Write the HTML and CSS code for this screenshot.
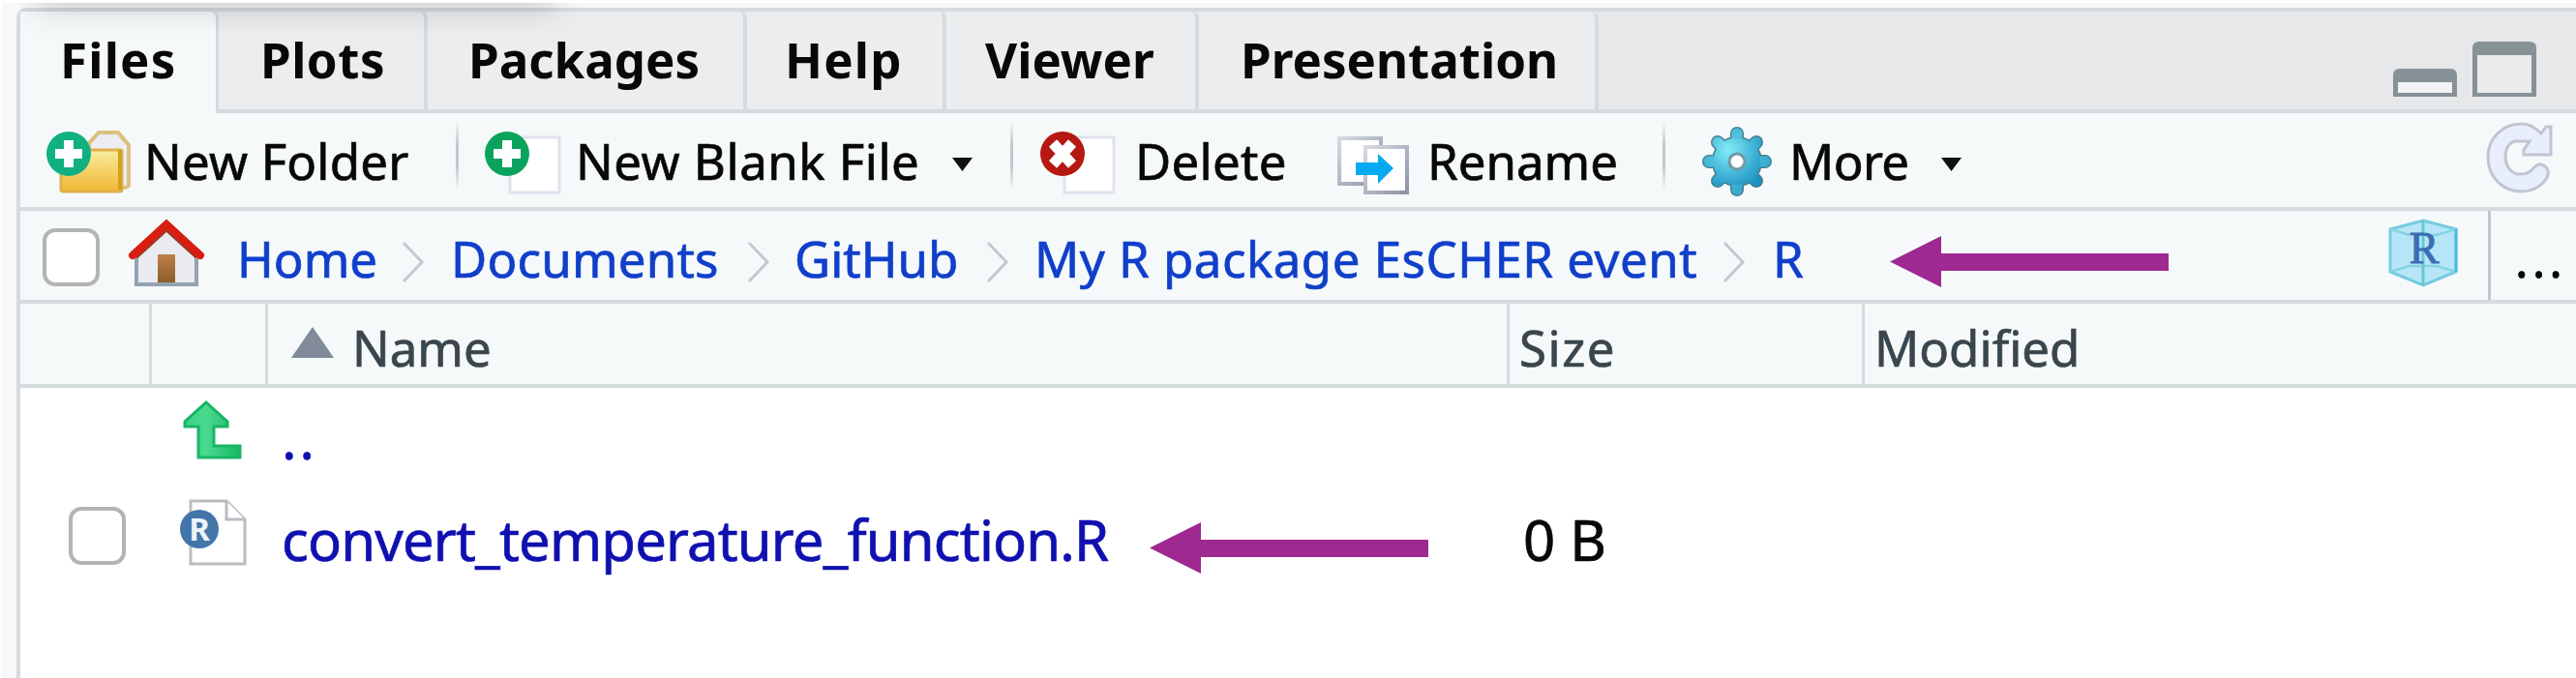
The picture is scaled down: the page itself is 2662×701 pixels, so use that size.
FILE: index.html
```html
<!DOCTYPE html>
<html lang="en">
<head>
<meta charset="utf-8">
<title>Files</title>
<link rel="stylesheet" href="styles.css">
</head>
<body>
<div class="window-shadow"><div class="shadow-source"></div></div>
<main class="pane">
  <nav class="tabs">
    <div class="tab active files">Files</div>
    <div class="tab plots">Plots</div>
    <div class="tab packages">Packages</div>
    <div class="tab help">Help</div>
    <div class="tab viewer">Viewer</div>
    <div class="tab presentation">Presentation</div>
    <div class="tab-fill">
      <svg width="148" height="57" viewBox="0 0 148 57">
        <path d="M0 57V35Q0 28 7 28H59Q66 28 66 35V57Z" fill="#879297"/><rect x="5" y="42" width="56" height="11" fill="#f0f2f3"/>
        <path d="M82 57V7Q82 0 89 0H141Q148 0 148 7V57Z" fill="#879297"/><rect x="87" y="14" width="56" height="39" fill="#e9ebec"/>
      </svg>
    </div>
  </nav>

  <div class="toolbar">
    <svg class="icon-folder" width="88" height="66" viewBox="0 0 88 66">
      <defs><linearGradient id="gold" x2="0" y2="1"><stop offset="0" stop-color="#f9eda0"/><stop offset="1" stop-color="#efb733"/></linearGradient></defs>
      <path d="M44 20V13L54 2H74L85 15V56Q85 59 78 59" fill="#ebedf2" stroke="#dcc17e" stroke-width="4"/>
      <rect x="15" y="20" width="63" height="43" rx="2" fill="url(#gold)" stroke="#dfb04b" stroke-width="3"/>
      <path d="M76 20V61" stroke="#d2a21f" stroke-width="4"/>
      <circle cx="23" cy="24" r="23" fill="#10b081"/><path d="M23 10V38M9 24H37" stroke="#fff" stroke-width="10"/>
    </svg>
    <span class="label folder">New Folder</span>
    <i class="sep"></i>
    <svg class="icon-file" width="80" height="66" viewBox="0 0 80 66">
      <rect x="27" y="7" width="51" height="57" fill="#fff" stroke="#dfe3ec" stroke-width="3"/>
      <circle cx="24" cy="24" r="23" fill="#0aa35d"/><path d="M24 10V38M10 24H38" stroke="#fff" stroke-width="10"/>
    </svg>
    <span class="label blank">New Blank File</span>
    <svg class="caret" width="23" height="16" viewBox="0 0 23 16"><path d="M1 0H22L11.500 14Z" fill="#111"/></svg>
    <i class="sep"></i>
    <svg class="icon-file" width="80" height="66" viewBox="0 0 80 66">
      <rect x="26" y="7" width="51" height="57" fill="#fff" stroke="#dfe3ec" stroke-width="3"/>
      <circle cx="24" cy="24" r="23" fill="#b51811"/><path d="M14 13L34 35M34 13L14 35" stroke="#fff" stroke-width="11"/>
    </svg>
    <span class="label delete">Delete</span>
    <svg class="icon-rename" width="76" height="62" viewBox="0 0 76 62">
      <defs><linearGradient id="edge" x2="1" y2="1"><stop offset="0" stop-color="#d7dae2"/><stop offset="1" stop-color="#8d93a5"/></linearGradient></defs>
      <rect x="3" y="3" width="43" height="47" fill="#fff" stroke="url(#edge)" stroke-width="4"/>
      <rect x="30" y="12" width="43" height="47" fill="#fff" stroke="url(#edge)" stroke-width="4"/>
      <path d="M20 28H43V19L59 34L43 50V41H20Z" fill="#05aaf0"/>
    </svg>
    <span class="label rename">Rename</span>
    <i class="sep"></i>
    <svg class="icon-gear" width="72" height="76" viewBox="0 0 72 76">
      <defs><radialGradient id="teal" gradientUnits="userSpaceOnUse" cx="27" cy="26" r="44"><stop offset="0" stop-color="#83edf8"/><stop offset=".5" stop-color="#4bbddb"/><stop offset="1" stop-color="#1b8fc0"/></radialGradient></defs>
      <g stroke="#467f92" stroke-linecap="round" stroke-width="14"><path d="M36 9V67M7 38H65M16 18L56 58M56 18L16 58"/><circle cx="36" cy="38" r="19" fill="#467f92"/></g>
      <g stroke="url(#teal)" stroke-linecap="round" stroke-width="11"><path d="M36 9V67M7 38H65M16 18L56 58M56 18L16 58"/><circle cx="36" cy="38" r="19" fill="url(#teal)"/></g>
      <path d="M36 9.010L36.010 67M7 38.010L65 38" stroke="#4bbddb" stroke-opacity=".6" stroke-linecap="round" stroke-width="11"/>
      <circle cx="36" cy="38" r="24" fill="url(#teal)"/>
      <circle cx="36" cy="38" r="8" fill="#fff" stroke="#729aa6" stroke-width="3"/>
    </svg>
    <span class="label more">More</span>
    <svg class="caret" width="23" height="16" viewBox="0 0 23 16"><path d="M1 0H22L11.500 14Z" fill="#111"/></svg>
    <svg class="icon-refresh" width="70" height="74" viewBox="0 0 70 74">
      <path d="M57 12C50 5 44 2 37 2C17 2 2 17 2 36C2 57 17 72 37 72C46 72 53 69 59 63C65 57 66 50 61 46C56 42 52 44 48 49C44 54 40 54 31 54C25 51 20 46 20 36C20 27 25 20 31 20H45L39 29V34H67V5H62Z" fill="#e8eefb" stroke="#c0c5d1" stroke-width="3"/>
    </svg>
  </div>

  <div class="crumbs">
    <span class="checkbox"></span>
    <svg class="icon-home" width="80" height="72" viewBox="0 0 80 72">
      <defs><linearGradient id="door" x2="0" y2="1"><stop offset="0" stop-color="#bd814a"/><stop offset="1" stop-color="#8e5c2d"/></linearGradient></defs>
      <path d="M9 36L40 8L71 36V67H9Z" fill="#e9ebf1" stroke="#94a3af" stroke-width="4"/>
      <rect x="31" y="36" width="18" height="29" fill="url(#door)"/>
      <path d="M7 37L40 7L73 37" fill="none" stroke="#9a3a28" stroke-width="9"/>
      <path d="M5 37L40 5L75 37" fill="none" stroke="#d81e10" stroke-width="8" stroke-linecap="round"/>
    </svg>
    <a class="link">Home</a>
    <svg class="chevron" width="24" height="44" viewBox="0 0 24 44"><path d="M2 2L21 22L2 42"/></svg>
    <a class="link docs">Documents</a>
    <svg class="chevron" width="24" height="44" viewBox="0 0 24 44"><path d="M2 2L21 22L2 42"/></svg>
    <a class="link">GitHub</a>
    <svg class="chevron" width="24" height="44" viewBox="0 0 24 44"><path d="M2 2L21 22L2 42"/></svg>
    <a class="link project">My R package EsCHER event</a>
    <svg class="chevron" width="24" height="44" viewBox="0 0 24 44"><path d="M2 2L21 22L2 42"/></svg>
    <a class="link">R</a>
    <svg class="pointer" width="288" height="53" viewBox="0 0 288 53"><path d="M0 26.500L53 0V18H288V36H53V53Z"/></svg>
    <svg class="icon-project" width="72" height="72" viewBox="0 0 72 72">
      <path d="M2 11L36 2L70 11V55L36 69L2 55Z" fill="#b6e5f8" stroke="#75cbdf" stroke-width="3"/>
      <path d="M2 11L22 17H50L70 11M2 55L22 49H50L70 55" fill="none" stroke="#84d3e1" stroke-width="2.500"/>
      <path d="M36 2V69" stroke="#65c9cf" stroke-width="3"/><path d="M70 11V55" stroke="#4dbddc" stroke-width="3"/>
      <text x="37" y="46" text-anchor="middle" class="project-letter">R</text>
    </svg>
    <i class="more-sep"></i>
    <span class="label dots">...</span>
  </div>

  <div class="head">
    <div></div><div></div>
    <div class="name"><svg class="sort" width="44" height="32" viewBox="0 0 44 32"><path d="M22 0L44 32H0Z" fill="#808a99"/></svg><span>Name</span></div>
    <div class="size">Size</div>
    <div class="modified">Modified</div>
  </div>

  <div class="row">
    <span></span>
    <svg class="icon-up" width="62" height="62" viewBox="0 0 62 62">
      <defs><linearGradient id="green"><stop offset="0" stop-color="#3fd284"/><stop offset=".4" stop-color="#48d990"/><stop offset="1" stop-color="#17b960"/></linearGradient></defs>
      <path d="M24 2L46 22V27H32V47H59V59H16V27H2V22Z" fill="url(#green)" stroke="#18b565" stroke-width="3"/>
    </svg>
    <a class="file up">..</a>
  </div>
  <div class="row">
    <span class="checkbox"></span>
    <svg class="icon-r" width="71" height="70" viewBox="0 0 71 70">
      <path d="M12 2H49L68 21V67H12Z" fill="#fff" stroke="#b9bdc1" stroke-width="3"/>
      <path d="M49 2V21H68" fill="#fff" stroke="#b9bdc1" stroke-width="3"/>
      <circle cx="21" cy="31" r="20" fill="#4375a9"/>
      <text x="21" y="43" text-anchor="middle" class="badge-letter">R</text>
    </svg>
    <a class="file">convert_temperature_function.R</a>
    <svg class="pointer" width="288" height="53" viewBox="0 0 288 53"><path d="M0 26.500L53 0V18H288V36H53V53Z"/></svg>
    <span class="bytes">0 B</span>
  </div>
</main>
</body>
</html>
```
FILE: styles.css
```css
* { box-sizing: border-box; }
body {
  margin: 0;
  height: 701px;
  overflow: hidden;
  background: linear-gradient(90deg, #fff 2px, #f6f8fa 2px);
  border-top: 3px solid #fff;
  padding: 5px 0 0 17px;
  font: 51px "Noto Sans", sans-serif;
  color: #080808;
  white-space: nowrap;
}
svg { display: block; overflow: visible; }

.pane {
  height: 693px;
  border: solid #d6dbde;
  border-width: 4px 0 0 4px;
  border-radius: 10px 0 0 0;
  background: #fff;
}
.window-shadow {
  position: absolute;
  left: 20px;
  top: 3px;
  width: 620px;
  height: 60px;
  overflow: hidden;
  pointer-events: none;
}
.shadow-source {
  width: 530px;
  height: 20px;
  margin: -27px 0 0 20px;
  box-shadow: 0 2px 36px 4px rgba(0, 0, 0, .28);
}

.tabs { display: flex; height: 105px; background: #e6e8ea; }
.tab {
  border: solid #d6dbde;
  border-width: 0 4px 4px 0;
  border-top-right-radius: 8px;
  background: #ebedee;
  font-weight: bold;
  line-height: 98.500px;
}
.active { border-width: 0 3px 0 0; background: #f5f9fa; }
.files { width: 205px; padding-left: 41px; letter-spacing: 1.200px; }
.plots { width: 216px; padding-left: 43px; letter-spacing: .5px; }
.packages { width: 330px; padding-left: 42px; }
.help { width: 206px; padding-left: 39px; letter-spacing: 1.200px; }
.viewer { width: 261px; padding-left: 40px; }
.presentation { width: 413px; padding-left: 43px; }
.tab-fill {
  flex: 1;
  display: flex;
  justify-content: flex-end;
  padding: 31px 41px 0 0;
  border-bottom: 4px solid #d6dbde;
}

.toolbar {
  display: grid;
  grid-template-columns: 100px 323px 29px 94px 389px 61px 30px 98px 209px 93px 244px 41px 89px 157px 564px 1fr;
  align-items: start;
  height: 101px;
  padding-left: 27px;
  border-bottom: 4px solid #d6dbde;
  background: #f5f9fa;
}
.label { padding-left: 1px; line-height: 99px; }
.label, .link, .head span, .size, .modified, .file, .bytes { -webkit-text-stroke: .7px currentColor; }
.folder { letter-spacing: .2px; }
.blank { letter-spacing: .5px; }
.delete { letter-spacing: .3px; }
.more { letter-spacing: -.6px; }
.sep {
  width: 3px;
  height: 72px;
  margin-top: 8px;
  background: linear-gradient(transparent, #c3c7ca 35%, #c3c7ca 65%, transparent);
}
.caret { margin-top: 46px; }
.icon-folder, .icon-file { margin-top: 18px; }
.icon-rename { margin-top: 23px; }
.icon-gear { margin-top: 12px; }
.icon-refresh { margin-top: 9px; }

.crumbs {
  display: grid;
  grid-template-columns: 88px 112px 171px 50px 307px 48px 199px 49px 712px 51px 122px 515px 103px 27px 1fr;
  align-items: start;
  height: 96px;
  padding-left: 23px;
  border-bottom: 4px solid #d6dbde;
  background: #f5f9fa;
}
.checkbox {
  width: 59px;
  height: 60px;
  border: 4px solid #b4b4b4;
  border-radius: 13px;
  background: #fff;
}
.crumbs .checkbox { margin-top: 18px; }
.icon-home { margin-top: 9px; }
.link { padding-left: 1px; color: #103fca; line-height: 98px; }
.docs { letter-spacing: .2px; }
.project { letter-spacing: .5px; }
.chevron { margin-top: 31px; fill: none; stroke: #c5c8cf; stroke-width: 3; }
.pointer { fill: #9e2a91; }
.crumbs .pointer { margin-top: 26px; }
.icon-project { margin-top: 8px; }
.project-letter { font: 46px "Liberation Serif", serif; fill: #3c6cb4; stroke: #3c6cb4; }
.more-sep { width: 3px; height: 92px; background: #c3c7cc; }
.dots { letter-spacing: 4px; line-height: 98px; }

.head {
  display: grid;
  grid-template-columns: 136px 120px 1283px 367px 1fr;
  grid-template-rows: 83px;
  height: 87px;
  border-bottom: 4px solid #d6dbde;
  background: #f5f9fa;
  color: #3a464d;
  line-height: 90px;
}
.head > div { height: 83px; border-right: 3px solid #d6dbde; }
.head > .modified { padding-left: 10px; border-right: 0; }
.name { display: flex; gap: 19px; padding-left: 24px; }
.sort { margin-top: 24px; }
.size { padding-left: 10px; letter-spacing: 1.500px; }

.row {
  display: grid;
  grid-template-columns: 114px 105px 896px 388px 1fr;
  align-items: start;
  height: 105px;
  padding-left: 50px;
  font-size: 58px;
  line-height: 103px;
}
.row .checkbox { margin-top: 18px; }
.icon-up { margin-top: 13px; margin-left: 4px; }
.icon-r { margin-top: 10px; }
.badge-letter { font: bold 33px "Noto Sans", sans-serif; fill: #eef3f8; }
.file { padding-left: 1px; color: #1010b0; letter-spacing: -.830px; }
.up { letter-spacing: 3px; }
.row .pointer { margin: 34px 0 0 2px; }
```
